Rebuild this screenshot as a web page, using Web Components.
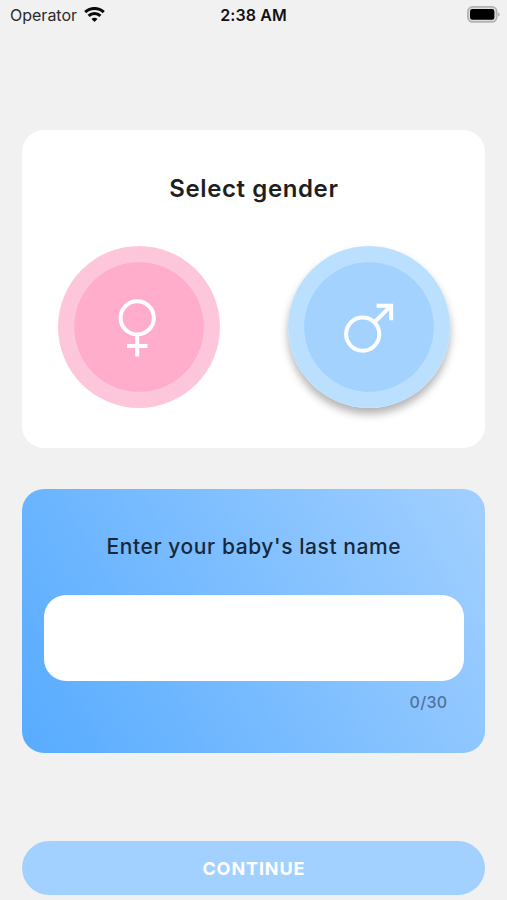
<!DOCTYPE html>
<html lang="en">
<head>
<meta charset="UTF-8">
<meta name="viewport" content="width=device-width, initial-scale=1.0">
<title>Baby name</title>
<style>
    body {
        margin: 0;
        height: 900px;
        overflow: hidden;
        background: #f1f1f1;
        font-family: Inter, "Liberation Sans", sans-serif;
        color: #1f1f1f;
    }
</style>
</head>
<body>

<baby-screen>
    <status-bar slot="status" operator="Operator">2:38 AM</status-bar>
    <gender-card>
        <span slot="title">Select gender</span>
        <gender-button gender="female"></gender-button>
        <gender-button gender="male" selected></gender-button>
    </gender-card>
    <name-card maxlength="30">Enter your baby's last name</name-card>
    <continue-button>CONTINUE</continue-button>
</baby-screen>

<script>
const screenTemplate = document.createElement("template");
screenTemplate.innerHTML = `
<style>
:host {
    display: flex;
    flex-direction: column;
    height: 900px;
}

main {
    display: flex;
    flex-direction: column;
    padding: 101.4px 21.6px 0 22.4px;
}
</style>
<slot name="status"></slot>
<main><slot></slot></main>
`;

class BabyScreen extends HTMLElement {
    constructor() {
        super();
        this.attachShadow({mode:'open'});
        this.shadowRoot.append(screenTemplate.content.cloneNode(true));
    }
}

customElements.define('baby-screen', BabyScreen);


const statusTemplate = document.createElement("template");
statusTemplate.innerHTML = `
<style>
:host {
    display: grid;
    grid-template-columns: 1fr auto 1fr;
    align-items: center;
    box-sizing: border-box;
    height: 29px;
    padding: 0 7px 0 10px;
    color: #111;
}

.left {
    display: flex;
    align-items: center;
    gap: 7px;
    font-size: 16px;
    color: #2b2b2b;
}

.time {
    margin-right: 3px;
    font-size: 16px;
    font-weight: 600;
    letter-spacing: 0.1px;
}

.battery {
    justify-self: end;
}

svg {
    display: block;
}
</style>
<div class="left">
    <span class="operator"></span>
    <svg width="21" height="15" viewBox="0 0 21 15" fill="none" stroke="#0a0a0a" stroke-width="3">
        <path d="M1.2 5.2 A13.4 13.4 0 0 1 19.8 5.2"/>
        <path d="M4.6 8.9 A8.4 8.4 0 0 1 16.4 8.9"/>
        <path d="M10.5 14.9 L7.5 11.9 A4.2 4.2 0 0 1 13.5 11.9 Z" fill="#0a0a0a" stroke="none"/>
    </svg>
</div>
<div class="time"><slot></slot></div>
<svg class="battery" width="33" height="17" viewBox="0 0 33 17">
    <rect x="0.9" y="0.9" width="28.8" height="15" rx="4.6" fill="#dedede" stroke="#b2b2b2" stroke-width="1.7"/>
    <rect x="3" y="3" width="24.4" height="10.8" rx="2.4" fill="#000"/>
    <path d="M31.2 6.2 Q32.6 7 32.6 8.4 Q32.6 9.8 31.2 10.6 Z" fill="#a9a9a9"/>
</svg>
`;

class StatusBar extends HTMLElement {
    constructor() {
        super();
        this.attachShadow({mode:'open'});
        this.shadowRoot.append(statusTemplate.content.cloneNode(true));
    }

    connectedCallback() {
        this.shadowRoot.querySelector('.operator').textContent = this.getAttribute('operator');
    }
}

customElements.define('status-bar', StatusBar);


const genderCardTemplate = document.createElement("template");
genderCardTemplate.innerHTML = `
<style>
:host {
    display: flex;
    flex-direction: column;
    box-sizing: border-box;
    height: 318px;
    padding: 42px 35.5px 0 35.6px;
    border-radius: 22px;
    background: #fff;
}

h1 {
    margin: 0 0 40px;
    font-size: 24px;
    line-height: 34px;
    font-weight: 600;
    letter-spacing: 0.6px;
    text-align: center;
}

.buttons {
    display: flex;
    justify-content: space-between;
}
</style>
<h1><slot name="title"></slot></h1>
<div class="buttons"><slot></slot></div>
`;

class GenderCard extends HTMLElement {
    constructor() {
        super();
        this.attachShadow({mode:'open'});
        this.shadowRoot.append(genderCardTemplate.content.cloneNode(true));
    }
}

customElements.define('gender-card', GenderCard);


const icons = {
    female: `
        <circle cx="79.2" cy="71.9" r="16.6"/>
        <path d="M79.2 88.5 V110.4 M69 100.1 H89.4"/>
    `,
    male: `
        <circle cx="74.7" cy="88.1" r="16.6"/>
        <path d="M86.6 76.2 L102.6 60.2 M88.6 59.7 H103.2 V74.2"/>
    `
};

const genderButtonTemplate = document.createElement("template");
genderButtonTemplate.innerHTML = `
<style>
:host {
    display: block;
    width: 162px;
    height: 162px;
    --ring: #fec6da;
    --fill: #ffadcb;
}

:host([gender="male"]) {
    --ring: #bbdfff;
    --fill: #a4d2ff;
}

button {
    display: block;
    box-sizing: border-box;
    width: 162px;
    height: 162px;
    padding: 0;
    border: 0;
    border-radius: 50%;
    background: radial-gradient(circle, var(--fill) 64.4px, var(--ring) 65.2px);
}

:host([selected]) button {
    box-shadow: 0 6px 8px rgba(0, 0, 0, 0.3);
}

svg {
    display: block;
    fill: none;
    stroke: #fff;
    stroke-width: 4;
}
</style>
<button type="button"><svg width="162" height="162" viewBox="0 0 162 162"></svg></button>
`;

class GenderButton extends HTMLElement {
    constructor() {
        super();
        this.attachShadow({mode:'open'});
        this.shadowRoot.append(genderButtonTemplate.content.cloneNode(true));

        this.addEventListener('click', () => {
            this.parentElement.querySelectorAll('gender-button').forEach((button) => {
                button.toggleAttribute('selected', button === this);
            });
        });
    }

    connectedCallback() {
        const gender = this.getAttribute('gender');
        this.shadowRoot.querySelector('svg').innerHTML = icons[gender];
        this.shadowRoot.querySelector('button').setAttribute('aria-label', gender);
    }
}

customElements.define('gender-button', GenderButton);


const nameCardTemplate = document.createElement("template");
nameCardTemplate.innerHTML = `
<style>
:host {
    display: flex;
    flex-direction: column;
    box-sizing: border-box;
    height: 264px;
    margin-top: 40.8px;
    padding: 43px 21.5px 0;
    border-radius: 22px;
    background: linear-gradient(60deg, #57abff, #a2d0ff);
}

label {
    margin-bottom: 32.4px;
    font-size: 21px;
    line-height: 30px;
    font-weight: 500;
    letter-spacing: 0.58px;
    text-align: center;
    color: #17283a;
}

input {
    box-sizing: border-box;
    width: 100%;
    height: 86px;
    padding: 0 22px;
    border: 0;
    border-radius: 22px;
    outline: 0;
    background: #fff;
    font: inherit;
    font-size: 21px;
}

.counter {
    margin: 10px 16.5px 0 0;
    font-size: 16px;
    line-height: 22px;
    font-weight: 500;
    letter-spacing: 0.3px;
    text-align: right;
    color: #50719a;
}
</style>
<label for="name"><slot></slot></label>
<input id="name" type="text">
<div class="counter"></div>
`;

class NameCard extends HTMLElement {
    constructor() {
        super();
        this.attachShadow({mode:'open'});
        this.shadowRoot.append(nameCardTemplate.content.cloneNode(true));

        this.input = this.shadowRoot.querySelector('input');
        this.counter = this.shadowRoot.querySelector('.counter');
        this.input.addEventListener('input', () => this.updateCounter());
    }

    connectedCallback() {
        this.input.maxLength = this.getAttribute('maxlength');
        this.updateCounter();
    }

    updateCounter() {
        this.counter.textContent = `${this.input.value.length}/${this.getAttribute('maxlength')}`;
    }
}

customElements.define('name-card', NameCard);


const continueTemplate = document.createElement("template");
continueTemplate.innerHTML = `
<style>
:host {
    display: block;
    margin-top: 88px;
}

button {
    display: block;
    width: 100%;
    height: 53.5px;
    padding: 1px 0 0;
    border: 0;
    border-radius: 27px;
    background: #a3d1ff;
    color: #fff;
    font: inherit;
    font-size: 18px;
    font-weight: 700;
    letter-spacing: 0.9px;
}
</style>
<button type="button"><slot></slot></button>
`;

class ContinueButton extends HTMLElement {
    constructor() {
        super();
        this.attachShadow({mode:'open'});
        this.shadowRoot.append(continueTemplate.content.cloneNode(true));
    }
}

customElements.define('continue-button', ContinueButton);
</script>
</body>
</html>
